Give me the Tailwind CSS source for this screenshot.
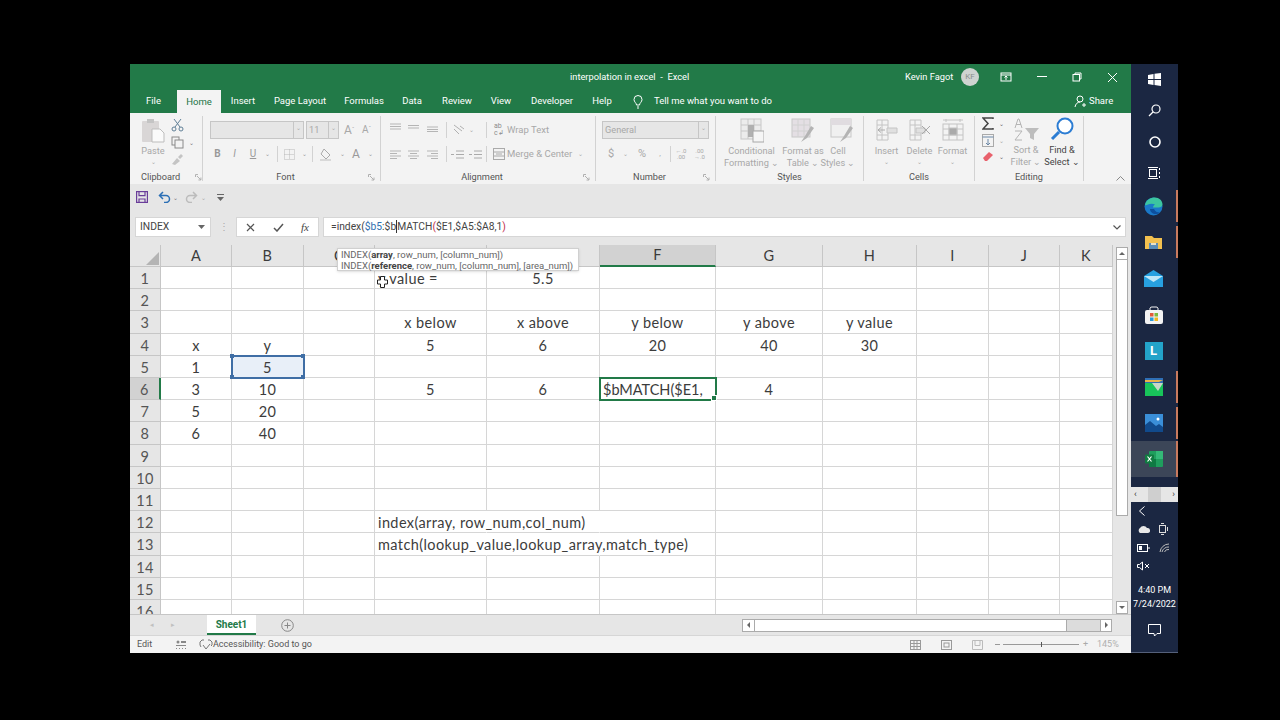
<!DOCTYPE html>
<html lang="en">
<head>
<meta charset="UTF-8">
<title>interpolation in excel - Excel</title>
<script src="https://cdn.jsdelivr.net/npm/@tailwindcss/browser@4"></script>
</head>
<body class="bg-black">
<div class="w-[1280px] h-[720px] bg-black pt-[64px] pl-[130px] overflow-hidden font-['Roboto',sans-serif]">
<div class="flex w-[1048px] h-[589px]">

<!-- excel window -->
<div class="relative w-[1001px] h-full flex flex-col bg-[#e6e6e6] overflow-hidden">

  <!-- title bar -->
  <div class="h-[26px] bg-[#227a48] text-white text-[9.3px] flex items-center shrink-0">
    <div class="w-[775px] pl-[440px] whitespace-pre">interpolation in excel  -  Excel</div>
    <div class="w-[48px] whitespace-nowrap">Kevin Fagot</div>
    <div class="ml-[8px] w-[18px] h-[18px] rounded-full bg-[#cfd3d0] text-[#8a8f8c] text-[8px] flex items-center justify-center">KF</div>
    <div class="ml-[9px] w-[36px] flex justify-center"><svg width="12" height="10" viewBox="0 0 12 10" fill="none" stroke="#fff"><rect x="1" y="1" width="10" height="8"/><path d="M1 3h10M6 8V4M4.500 5.500 6 4l1.500 1.500"/></svg></div>
    <div class="w-[35px] flex justify-center"><svg width="10" height="2"><rect width="10" height="1" fill="#fff"/></svg></div>
    <div class="w-[36px] flex justify-center"><svg width="10" height="10" viewBox="0 0 10 10" fill="none" stroke="#fff"><rect x="1" y="2.500" width="6.500" height="6.500"/><path d="M3 2.500V1h6v6H7.500"/></svg></div>
    <div class="w-[35px] flex justify-center"><svg width="11" height="11" viewBox="0 0 11 11" stroke="#fff"><path d="M1 1l9 9M10 1l-9 9"/></svg></div>
  </div>

  <!-- tabs -->
  <div class="h-[23px] bg-[#227a48] text-white text-[9.5px] flex items-center shrink-0">
    <div class="w-[47px] text-center">File</div>
    <div class="w-[44px] h-full pt-[1px] bg-[#f3f3f3] text-[#217346] text-center flex items-center justify-center">Home</div>
    <div class="w-[44px] text-center">Insert</div>
    <div class="w-[70px] text-center">Page Layout</div>
    <div class="w-[58px] text-center">Formulas</div>
    <div class="w-[38px] text-center">Data</div>
    <div class="w-[52px] text-center">Review</div>
    <div class="w-[36px] text-center">View</div>
    <div class="w-[66px] text-center">Developer</div>
    <div class="w-[34px] text-center">Help</div>
    <div class="ml-[14px] w-[12px]"><svg width="10" height="14" viewBox="0 0 10 14" fill="none" stroke="#fff"><path d="M3.500 10C3.500 8 1 7 1 4.500a4 4 0 0 1 8 0C9 7 6.500 8 6.500 10zM4 12h2M4.500 13.500h1"/></svg></div>
    <div class="ml-[9px] w-[420px] whitespace-nowrap">Tell me what you want to do</div>
    <div class="flex items-center gap-[2px]"><svg width="13" height="13" viewBox="0 0 13 13" fill="none" stroke="#fff"><circle cx="6" cy="4" r="3"/><path d="M1 12c.5-3 2.500-5 5-5M8 10h4M10 8v4"/></svg>Share</div>
  </div>

  <!-- ribbon -->
  <div class="h-[71px] bg-[#f3f3f3] flex shrink-0 text-[9.200px] leading-[12px] text-[#a8a8a8] py-[3px]">

    <!-- clipboard -->
    <div class="w-[73px] border-r border-[#d2d2d2] flex flex-col">
      <div class="h-[54px] flex pl-[10px] pt-[2px]">
        <div class="w-[26px] flex flex-col items-center">
          <svg width="24" height="25" viewBox="0 0 24 25"><rect x="1" y="3" width="17" height="21" rx="1" fill="#d9d6d6"/><rect x="6" y="1" width="7" height="4" fill="#c4c4c4"/><path d="M11 11h8l4 4v9H11z" fill="#fafafa" stroke="#bdbdbd"/></svg>
          <div class="mt-[2px]">Paste</div>
          <div class="text-[6px] leading-[10px]">⌄</div>
        </div>
        <div class="ml-[5px] flex flex-col items-start gap-[4px]">
          <svg width="13" height="14" viewBox="0 0 13 14" fill="none" stroke="#5f7f96"><path d="M3 1l6 8M10 1L4 9"/><circle cx="3" cy="11" r="2"/><circle cx="10" cy="11" r="2"/></svg>
          <div class="flex items-center gap-[5px]"><svg width="13" height="13" viewBox="0 0 13 13" fill="none" stroke="#8a8a8a"><rect x="1" y="1" width="7" height="8"/><rect x="4" y="4" width="8" height="8" fill="#f3f3f3"/></svg><span class="text-[6px] leading-[8px] text-[#777]">⌄</span></div>
          <svg width="13" height="12" viewBox="0 0 13 12"><path d="M1 11l5-6 3 3-5 4zM7 4l3-3 2 2-3 3z" fill="#c4c4c4"/></svg>
        </div>
      </div>
      <div class="h-[11px] flex items-start leading-[14px] pl-[11px] text-[#555]"><span class="w-[55px]">Clipboard</span><svg class="mt-[4px]" width="7" height="7" viewBox="0 0 7 7" fill="none" stroke="#b0b0b0"><path d="M.5 3V.5H3M2 2l4 4M6 3.500V6H3.500"/></svg></div>
    </div>

    <!-- font -->
    <div class="w-[178px] border-r border-[#d2d2d2] flex flex-col">
      <div class="h-[54px] pl-[7px] pt-[5px]">
        <div class="flex items-center h-[18px]">
          <div class="w-[94px] h-[18px] bg-[#e6e6e6] border border-[#c6c6c6] flex justify-end"><span class="w-[10px] border-l border-[#c6c6c6] text-[6px] text-center">⌄</span></div>
          <div class="ml-[2px] w-[33px] h-[18px] bg-[#e6e6e6] border border-[#c6c6c6] flex justify-between pl-[2px]"><span class="leading-[16px]">11</span><span class="w-[10px] border-l border-[#c6c6c6] text-[6px] text-center">⌄</span></div>
          <span class="ml-[5px] text-[12px] w-[18px]">A<sup class="text-[6px]">ˆ</sup></span>
          <span class="text-[10px] w-[14px]">A<sup class="text-[6px]">ˇ</sup></span>
        </div>
        <div class="flex items-center h-[18px] mt-[6px] text-[10px] text-[#999]">
          <span class="w-[15px] text-center font-bold">B</span>
          <span class="w-[19px] text-center italic">I</span>
          <span class="w-[18px] text-center underline">U</span>
          <span class="w-[10px] text-[6px] text-center">⌄</span>
          <span class="w-[6px] h-[16px] border-r border-[#d2d2d2]"></span>
          <span class="w-[22px] flex justify-center"><svg width="11" height="11" viewBox="0 0 11 11" fill="none" stroke="#b8b8b8" stroke-dasharray="1 1"><rect x=".5" y=".5" width="10" height="10"/><path d="M.5 5.500h10M5.500.5v10"/></svg></span>
          <span class="w-[8px] text-[6px] text-center">⌄</span>
          <span class="w-[5px] h-[16px] border-r border-[#d2d2d2]"></span>
          <span class="w-[25px] flex justify-center"><svg width="13" height="13" viewBox="0 0 13 13"><path d="M5 1l6 6-4 4-5-5z" fill="none" stroke="#aaa"/><rect x="1" y="11" width="11" height="2" fill="#d8d8d8"/></svg></span>
          <span class="w-[8px] text-[6px] text-center">⌄</span>
          <span class="w-[20px] text-center text-[12px]">A</span>
          <span class="w-[8px] text-[6px] text-center">⌄</span>
        </div>
      </div>
      <div class="h-[11px] flex items-start leading-[14px] text-[#555]"><span class="w-[165px] text-center">Font</span><svg class="mt-[4px]" width="7" height="7" viewBox="0 0 7 7" fill="none" stroke="#b0b0b0"><path d="M.5 3V.5H3M2 2l4 4M6 3.500V6H3.500"/></svg></div>
    </div>

    <!-- alignment -->
    <div class="w-[215px] border-r border-[#d2d2d2] flex flex-col">
      <div class="h-[54px] pl-[9px] pt-[5px]">
        <div class="flex items-center h-[18px]">
          <span class="w-[18px] mb-[5px]"><svg width="11" height="9" viewBox="0 0 11 9" stroke="#b5b5b5"><path d="M0 1h11M0 3.500h11M0 6h11"/></svg></span>
          <span class="w-[19px] mb-[5px]"><svg width="11" height="9" viewBox="0 0 11 9" stroke="#b5b5b5"><path d="M0 2.500h11M0 5h11"/></svg></span>
          <span class="w-[19px] mb-[5px]"><svg width="11" height="9" viewBox="0 0 11 9" stroke="#b5b5b5"><path d="M0 4h11M0 6.500h11M0 8.500h11"/></svg></span>
          <span class="w-[1px] h-[16px] bg-[#d2d2d2]"></span>
          <span class="w-[19px] pl-[5px]"><svg width="13" height="12" viewBox="0 0 13 12" fill="none" stroke="#b0b0b0"><path d="M2 1l8 6M2 5l5 5M8 2l4 3"/></svg></span>
          <span class="w-[10px] text-[6px] text-center">⌄</span>
          <span class="w-[11px] h-[16px] border-r border-[#d2d2d2]"></span>
          <span class="w-[20px] pl-[7px] text-[7px] leading-[7px] text-[#8c8c8c]">ab<br>c↲</span>
          <span class="text-[9.500px] whitespace-nowrap">Wrap Text</span>
        </div>
        <div class="flex items-center h-[18px] mt-[6px]">
          <span class="w-[18px]"><svg width="11" height="9" viewBox="0 0 11 9" stroke="#b5b5b5"><path d="M0 1h11M0 3.500h7M0 6h11M0 8.500h7"/></svg></span>
          <span class="w-[19px]"><svg width="11" height="9" viewBox="0 0 11 9" stroke="#b5b5b5"><path d="M0 1h11M2 3.500h7M0 6h11M2 8.500h7"/></svg></span>
          <span class="w-[19px]"><svg width="11" height="9" viewBox="0 0 11 9" stroke="#b5b5b5"><path d="M0 1h11M4 3.500h7M0 6h11M4 8.500h7"/></svg></span>
          <span class="w-[1px] h-[16px] bg-[#d2d2d2]"></span>
          <span class="w-[18px] pl-[4px]"><svg width="13" height="9" viewBox="0 0 13 9" stroke="#aaa"><path d="M5 1h8M5 4.500h8M5 8h8M0 4.500h3"/></svg></span>
          <span class="w-[18px] pl-[4px]"><svg width="13" height="9" viewBox="0 0 13 9" stroke="#aaa"><path d="M5 1h8M5 4.500h8M5 8h8M0 4.500h3"/></svg></span>
          <span class="w-[4px] h-[16px] border-r border-[#d2d2d2]"></span>
          <span class="w-[20px] pl-[6px]"><svg width="12" height="12" viewBox="0 0 12 12" fill="none" stroke="#aaa"><rect x=".5" y=".5" width="11" height="11"/><path d="M.5 4h11M.5 8h11M3 6h6"/></svg></span>
          <span class="text-[9.500px] whitespace-nowrap">Merge &amp; Center</span>
          <span class="ml-[6px] text-[6px]">⌄</span>
        </div>
      </div>
      <div class="h-[11px] flex items-start leading-[14px] text-[#555]"><span class="w-[202px] text-center">Alignment</span><svg class="mt-[4px]" width="7" height="7" viewBox="0 0 7 7" fill="none" stroke="#b0b0b0"><path d="M.5 3V.5H3M2 2l4 4M6 3.500V6H3.500"/></svg></div>
    </div>

    <!-- number -->
    <div class="w-[120px] border-r border-[#d2d2d2] flex flex-col">
      <div class="h-[54px] pl-[6px] pt-[5px]">
        <div class="w-[107px] h-[18px] bg-[#e6e6e6] border border-[#c6c6c6] flex justify-between pl-[2px]"><span class="leading-[16px]">General</span><span class="w-[10px] border-l border-[#c6c6c6] text-[6px] text-center">⌄</span></div>
        <div class="flex items-center h-[18px] mt-[6px] text-[11px]">
          <span class="w-[18px] text-center">$</span>
          <span class="w-[10px] text-[6px] text-center">⌄</span>
          <span class="w-[24px] text-center">%</span>
          <span class="w-[12px] text-center text-[8px]">,</span>
          <span class="w-[5px] h-[16px] border-r border-[#d2d2d2]"></span>
          <span class="w-[20px] text-center text-[6px] leading-[6px]">←.0<br>.00</span>
          <span class="w-[17px] text-center text-[6px] leading-[6px]">.00<br>→.0</span>
        </div>
      </div>
      <div class="h-[11px] flex items-start leading-[14px] text-[#555]"><span class="w-[107px] text-center">Number</span><svg class="mt-[4px]" width="7" height="7" viewBox="0 0 7 7" fill="none" stroke="#b0b0b0"><path d="M.5 3V.5H3M2 2l4 4M6 3.500V6H3.500"/></svg></div>
    </div>

    <!-- styles -->
    <div class="w-[148px] border-r border-[#d2d2d2] flex flex-col">
      <div class="h-[54px] flex pl-[12px] pt-[2px] text-center">
        <div class="w-[47px] flex flex-col items-center">
          <svg width="24" height="25" viewBox="0 0 24 25" fill="none"><rect x="1" y="1" width="20" height="20" fill="#ececec" stroke="#c8c8c8"/><path d="M8 1v20M14 1v20M1 7h20M1 13h20" stroke="#c8c8c8"/><rect x="8" y="7" width="6" height="12" fill="#b0b0b0"/><rect x="13" y="13" width="11" height="11" fill="#f5f5f5" stroke="#a8a8a8"/></svg>
          <div class="mt-[2px] whitespace-nowrap">Conditional</div>
          <div class="whitespace-nowrap">Formatting ⌄</div>
        </div>
        <div class="ml-[5px] w-[46px] flex flex-col items-center">
          <svg width="24" height="25" viewBox="0 0 24 25" fill="none"><rect x="1" y="1" width="18" height="18" fill="#e4dfe4" stroke="#c8c8c8"/><path d="M7 1v18M13 1v18M1 7h18M1 13h18" stroke="#d2d2d2"/><path d="M10 24l4-6 6-10 3 2-7 10z" fill="#b4b4b4"/></svg>
          <div class="mt-[2px] whitespace-nowrap">Format as</div>
          <div class="whitespace-nowrap">Table ⌄</div>
        </div>
        <div class="w-[24px] flex flex-col items-center">
          <svg class="ml-[8px]" width="24" height="25" viewBox="0 0 24 25" fill="none"><rect x="1" y="1" width="20" height="18" fill="#f0f0f0" stroke="#c8c8c8"/><rect x="1" y="1" width="20" height="6" fill="#e0dce0"/><path d="M10 24l4-6 6-10 3 2-7 10z" fill="#b4b4b4"/></svg>
          <div class="mt-[2px]">Cell</div>
          <div class="whitespace-nowrap">Styles ⌄</div>
        </div>
      </div>
      <div class="h-[11px] text-center text-[#555] leading-[14px]">Styles</div>
    </div>

    <!-- cells -->
    <div class="w-[111px] border-r border-[#d2d2d2] flex flex-col">
      <div class="h-[54px] flex pl-[6px] pt-[2px] text-center">
        <div class="w-[33px] flex flex-col items-center">
          <svg width="22" height="25" viewBox="0 0 22 25" fill="none" stroke="#c4c4c4"><path d="M1 2h11v5H1zM1 17h11v5H1zM1 7v10M12 17V7M6 2v20"/><path d="M11 10h10v5H11z" fill="#e0e0e0"/><path d="M2 12h7M5 9.500 2 12l3 2.500" stroke="#aaa"/></svg>
          <div class="mt-[2px]">Insert</div>
          <div class="text-[6px] leading-[10px]">⌄</div>
        </div>
        <div class="w-[33px] flex flex-col items-center">
          <svg width="22" height="25" viewBox="0 0 22 25" fill="none" stroke="#c4c4c4"><path d="M1 2h11v5H1zM1 17h11v5H1zM1 7v10M12 17V7M6 2v20"/><path d="M7 10h9v5H7z" fill="#e0e0e0"/><path d="M13 8l8 8M21 8l-8 8" stroke="#aaa"/></svg>
          <div class="mt-[2px]">Delete</div>
          <div class="text-[6px] leading-[10px]">⌄</div>
        </div>
        <div class="w-[33px] flex flex-col items-center">
          <svg width="22" height="25" viewBox="0 0 22 25" fill="none" stroke="#c4c4c4"><path d="M1 2h20M4 1v3M18 1v3"/><rect x="1" y="6" width="20" height="16"/><path d="M7 6v16M15 6v16M1 11h20M1 17h20"/><rect x="7" y="10" width="8" height="7" fill="#aaa"/></svg>
          <div class="mt-[2px]">Format</div>
          <div class="text-[6px] leading-[10px]">⌄</div>
        </div>
      </div>
      <div class="h-[11px] text-center text-[#555] leading-[14px]">Cells</div>
    </div>

    <!-- editing -->
    <div class="w-[109px] border-r border-[#d2d2d2] flex flex-col">
      <div class="h-[54px] flex pl-[7px] pt-[1px] text-center">
        <div class="w-[26px] flex flex-col gap-[4px]">
          <div class="flex items-center gap-[5px]"><svg width="12" height="13" viewBox="0 0 12 13" fill="none" stroke="#444" stroke-width="1.500"><path d="M11 2V1H1l5 5.500L1 12h10v-1"/></svg><span class="text-[6px] leading-[8px] text-[#666]">⌄</span></div>
          <div class="flex items-center gap-[5px]"><svg width="12" height="13" viewBox="0 0 12 13" fill="none" stroke="#aaa"><rect x=".5" y=".5" width="11" height="12"/><path d="M.5 3h11M6 5v6M4 9l2 2 2-2" stroke="#6b87a6"/></svg><span class="text-[6px] leading-[8px]">⌄</span></div>
          <div class="flex items-center gap-[5px]"><svg width="12" height="11" viewBox="0 0 12 11"><path d="M1 7l6-6 4 3-6 6H3z" fill="#e8616c"/></svg><span class="text-[6px] leading-[8px] text-[#666]">⌄</span></div>
        </div>
        <div class="w-[36px] flex flex-col items-center">
          <svg width="26" height="25" viewBox="0 0 26 25"><path d="M12 11 26 11l-5 6v6l-4-2v-4z" fill="#bdbdbd"/><path d="M2 11 5 2h1l3 9M3 7.500h5M2 14h7l-7 9h7" fill="none" stroke="#b4b4b4"/></svg>
          <div class="mt-[2px] whitespace-nowrap">Sort &amp;</div>
          <div class="whitespace-nowrap">Filter ⌄</div>
        </div>
        <div class="w-[36px] flex flex-col items-center text-[#444]">
          <svg width="26" height="25" viewBox="0 0 26 25" fill="none"><circle cx="16" cy="9" r="7.500" stroke="#2b7cd3" stroke-width="2" fill="#fff"/><path d="M10 15l-7 7" stroke="#2b7cd3" stroke-width="3"/></svg>
          <div class="mt-[2px] whitespace-nowrap">Find &amp;</div>
          <div class="whitespace-nowrap">Select ⌄</div>
        </div>
      </div>
      <div class="h-[11px] text-center text-[#555] leading-[14px]">Editing</div>
    </div>

    <div class="flex-1 flex flex-col justify-end items-end pr-[6px] pb-[0px]"><svg width="9" height="5" viewBox="0 0 9 5" fill="none" stroke="#888"><path d="M.5 4.500l4-4 4 4"/></svg></div>
  </div>

  <!-- quick access toolbar -->
  <div class="h-[26px] flex items-center pl-[6px] shrink-0">
    <svg width="12" height="12" viewBox="0 0 12 12" fill="none" stroke="#6a3d9a" stroke-width="1.200"><rect x=".6" y=".6" width="10.800" height="10.800"/><path d="M3 .6v4h6v-4M3 11.400V8h6v3.400"/></svg>
    <svg class="ml-[10px]" width="13" height="12" viewBox="0 0 13 12" fill="none" stroke="#2b6fb5" stroke-width="1.500"><path d="M5 1 1.500 4.500 5 8M2 4.500h6a3.500 3.500 0 0 1 0 7H6"/></svg>
    <span class="ml-[2px] text-[6px] text-[#777]">⌄</span>
    <svg class="ml-[7px]" width="13" height="12" viewBox="0 0 13 12" fill="none" stroke="#bcbcbc" stroke-width="1.500"><path d="M8 1l3.500 3.500L8 8M11 4.500H5a3.500 3.500 0 0 0 0 7h2"/></svg>
    <span class="ml-[3px] text-[6px] text-[#aaa]">⌄</span>
    <svg class="ml-[11px]" width="7" height="7" viewBox="0 0 7 7" fill="#666"><rect width="7" height="1"/><path d="M0 3h7L3.500 7z"/></svg>
  </div>

  <!-- formula bar -->
  <div class="h-[35px] flex pl-[5px] pt-[7px] shrink-0 text-[10.300px] text-[#444]">
    <div class="w-[76px] h-[20px] bg-white border border-[#d6d6d6] flex items-center justify-between pl-[4px] pr-[5px]">INDEX<svg width="7" height="4"><path d="M0 0h7L3.500 4z" fill="#666"/></svg></div>
    <div class="w-[25px] h-[20px] flex items-center justify-center text-[#aaa]">⋮</div>
    <div class="w-[83px] h-[20px] bg-white border border-[#d6d6d6] flex items-center">
      <svg class="ml-[9px]" width="9" height="9" viewBox="0 0 9 9" stroke="#555" stroke-width="1.200"><path d="M1 1l7 7M8 1L1 8"/></svg>
      <svg class="ml-[18px]" width="11" height="9" viewBox="0 0 11 9" fill="none" stroke="#555" stroke-width="1.500"><path d="M1 5l3 3 6-7"/></svg>
      <span class="ml-[17px] italic font-['Liberation_Serif',serif] text-[11px]">fx</span>
    </div>
    <div class="ml-[4px] w-[803px] h-[20px] bg-white border border-[#d6d6d6] flex items-center pl-[7px] pr-[4px] justify-between">
      <span>=index(<span class="text-[#2f6fb0]">$b5</span>:$b<span class="border-l border-[#333]">MATCH</span><span class="text-[#c0304a]">(</span>$E1,$A5:$A8,1<span class="text-[#c0304a]">)</span></span>
      <svg width="8" height="5" viewBox="0 0 8 5" fill="none" stroke="#555" stroke-width="1.200"><path d="M.5.5 4 4 7.500.5"/></svg>
    </div>
  </div>

  <!-- sheet -->
  <div class="h-[369px] flex shrink-0 overflow-hidden">
    <table class="table-fixed border-separate border-spacing-0 w-[983px] h-min font-['Lato',sans-serif] text-[14.5px] leading-[18px] tracking-[.4px] text-[#3c3c3c] text-center bg-white [&_td]:pt-[2px] [&_td]:border-r [&_td]:border-b [&_td]:border-[#d6d6d6] [&_td]:whitespace-nowrap [&_th]:p-0 [&_th]:font-normal [&_th]:bg-[#e6e6e6] [&_th]:border-r [&_th]:border-[#c6c6c6] [&_th]:border-b">
      <colgroup><col class="w-[31px]"><col class="w-[71px]"><col class="w-[72px]"><col class="w-[71px]"><col class="w-[112px]"><col class="w-[113px]"><col class="w-[116px]"><col class="w-[107px]"><col class="w-[94px]"><col class="w-[72px]"><col class="w-[71px]"><col class="w-[53px]"></colgroup>
      <thead>
        <tr class="h-[22px]">
          <th class="overflow-hidden"><svg class="ml-[16px] mt-[6px]" width="13" height="13"><path d="M13 0v13H0z" fill="#b4b4b4"/></svg></th>
          <th>A</th><th>B</th><th>C</th><th>D</th><th>E</th>
          <th class="bg-[#d2d2d2]! border-b-2! border-b-[#227a48]!">F</th>
          <th>G</th><th>H</th><th>I</th><th>J</th><th>K</th>
        </tr>
      </thead>
      <tbody class="[&_td:first-child]:bg-[#e6e6e6] [&_td:first-child]:border-[#c6c6c6] [&_td:first-child]:text-[#555]">
        <tr class="h-[22px]"><td>1</td><td></td><td></td><td></td><td class="text-left pl-[3px]!">y value =</td><td>5.5</td><td></td><td></td><td></td><td></td><td></td><td></td></tr>
        <tr class="h-[22px]"><td>2</td><td></td><td></td><td></td><td></td><td></td><td></td><td></td><td></td><td></td><td></td><td></td></tr>
        <tr class="h-[23px]"><td>3</td><td></td><td></td><td></td><td>x below</td><td>x above</td><td>y below</td><td>y above</td><td>y value</td><td></td><td></td><td></td></tr>
        <tr class="h-[22px]"><td>4</td><td>x</td><td>y</td><td></td><td>5</td><td>6</td><td>20</td><td>40</td><td>30</td><td></td><td></td><td></td></tr>
        <tr class="h-[22px]"><td>5</td><td>1</td>
          <td class="relative bg-[#e8eff8] outline-2 -outline-offset-1 outline-[#3f6ea5]">5<span class="absolute -left-[2px] -top-[2px] w-[4px] h-[4px] bg-[#3f6ea5]"></span><span class="absolute -right-[2px] -top-[2px] w-[4px] h-[4px] bg-[#3f6ea5]"></span><span class="absolute -left-[2px] -bottom-[2px] w-[4px] h-[4px] bg-[#3f6ea5]"></span><span class="absolute -right-[2px] -bottom-[2px] w-[4px] h-[4px] bg-[#3f6ea5]"></span></td>
          <td></td><td></td><td></td><td></td><td></td><td></td><td></td><td></td><td></td></tr>
        <tr class="h-[22px]"><td class="bg-[#d2d2d2]! border-r-2! border-r-[#227a48]!">6</td><td>3</td><td>10</td><td></td><td>5</td><td>6</td>
          <td class="relative text-left pl-[3px]! tracking-normal outline-2 -outline-offset-1 outline-[#227a48]">$bMATCH($E1,<span class="absolute -right-[2px] -bottom-[2px] w-[4px] h-[4px] bg-[#227a48] border border-white box-content"></span></td>
          <td>4</td><td></td><td></td><td></td><td></td></tr>
        <tr class="h-[22px]"><td>7</td><td>5</td><td>20</td><td></td><td></td><td></td><td></td><td></td><td></td><td></td><td></td><td></td></tr>
        <tr class="h-[23px]"><td>8</td><td>6</td><td>40</td><td></td><td></td><td></td><td></td><td></td><td></td><td></td><td></td><td></td></tr>
        <tr class="h-[22px]"><td>9</td><td></td><td></td><td></td><td></td><td></td><td></td><td></td><td></td><td></td><td></td><td></td></tr>
        <tr class="h-[22px]"><td>10</td><td></td><td></td><td></td><td></td><td></td><td></td><td></td><td></td><td></td><td></td><td></td></tr>
        <tr class="h-[22px]"><td>11</td><td></td><td></td><td></td><td></td><td></td><td></td><td></td><td></td><td></td><td></td><td></td></tr>
        <tr class="h-[22px]"><td>12</td><td></td><td></td><td></td><td class="text-left pl-[3px]! border-r-transparent!">index(array, row_num,col_num)</td><td class="border-r-transparent!"></td><td></td><td></td><td></td><td></td><td></td><td></td></tr>
        <tr class="h-[23px]"><td>13</td><td></td><td></td><td></td><td class="text-left pl-[3px]! border-r-transparent!">match(lookup_value,lookup_array,match_type)</td><td class="border-r-transparent!"></td><td></td><td></td><td></td><td></td><td></td><td></td></tr>
        <tr class="h-[22px]"><td>14</td><td></td><td></td><td></td><td></td><td></td><td></td><td></td><td></td><td></td><td></td><td></td></tr>
        <tr class="h-[22px]"><td>15</td><td></td><td></td><td></td><td></td><td></td><td></td><td></td><td></td><td></td><td></td><td></td></tr>
        <tr class="h-[22px]"><td>16</td><td></td><td></td><td></td><td></td><td></td><td></td><td></td><td></td><td></td><td></td><td></td></tr>
      </tbody>
    </table>
    <!-- vertical scrollbar -->
    <div class="ml-[3px] w-[12px] h-full pt-[2px] flex flex-col">
      <div class="h-[13px] bg-white border border-[#ababab] flex items-center justify-center"><svg width="6" height="3"><path d="M3 0l3 3H0z" fill="#666"/></svg></div>
      <div class="h-[256px] bg-white border-x border-b border-[#ababab]"></div>
      <div class="flex-1"></div>
      <div class="h-[13px] bg-white border border-[#ababab] flex items-center justify-center"><svg width="6" height="3"><path d="M0 0h6L3 3z" fill="#666"/></svg></div>
    </div>
  </div>

  <!-- sheet tabs -->
  <div class="h-[21px] flex items-center shrink-0 border-t border-[#c6c6c6] text-[10px]">
    <span class="ml-[20px] text-[7px] leading-[10px] text-[#c0c0c0] w-[21px]">◂</span>
    <span class="text-[7px] leading-[10px] text-[#c0c0c0] w-[36px]">▸</span>
    <div class="w-[49px] h-full -mt-px bg-white border-b-2 border-[#227a48] text-[#227a48] font-bold text-center leading-[19px]">Sheet1</div>
    <svg class="ml-[25px]" width="13" height="13" viewBox="0 0 13 13" fill="none" stroke="#888"><circle cx="6.500" cy="6.500" r="5.800"/><path d="M3.500 6.500h6M6.500 3.500v6"/></svg>
    <div class="ml-[448px] w-[370px] h-[13px] flex border border-[#ababab]">
      <div class="w-[12px] bg-white border-r border-[#ababab] flex items-center justify-center"><svg width="3" height="6"><path d="M3 0v6L0 3z" fill="#666"/></svg></div>
      <div class="w-[312px] bg-white border-r border-[#ababab]"></div>
      <div class="flex-1 bg-[#dcdcdc]"></div>
      <div class="w-[11px] bg-white border-l border-[#ababab] flex items-center justify-center"><svg width="3" height="6"><path d="M0 0v6l3-3z" fill="#666"/></svg></div>
    </div>
  </div>

  <!-- status bar -->
  <div class="flex-1 bg-[#f3f3f3] border-t border-[#d6d6d6] flex items-center text-[9px] text-[#555]">
    <span class="ml-[7px] w-[39px]">Edit</span>
    <svg width="10" height="10" viewBox="0 0 10 10" fill="#888"><circle cx="2" cy="2" r="1.500"/><path d="M5 1h5v2H5zM0 5h10v1H0zM0 8h1v1H0zM3 8h1v1H3zM6 8h1v1H6zM9 8h1v1H9z"/></svg>
    <svg class="ml-[13px]" width="14" height="11" viewBox="0 0 14 11" fill="none" stroke="#777"><path d="M5 1H3L1 3v3l1 2M9 1h2l2 2v3l-1 1M4 6l3 4 4-5"/></svg>
    <span class="w-[97px] whitespace-nowrap">Accessibility: Good to go</span>
    <svg class="ml-[600px]" width="11" height="10" viewBox="0 0 11 10" fill="none" stroke="#999"><rect x=".5" y=".5" width="10" height="9"/><path d="M4 .5v9M7 .5v9M.5 3.500h10M.5 6.500h10"/></svg>
    <svg class="ml-[20px]" width="11" height="10" viewBox="0 0 11 10" fill="none" stroke="#999"><rect x=".5" y=".5" width="10" height="9"/><rect x="3" y="3" width="5" height="4"/></svg>
    <svg class="ml-[20px]" width="11" height="10" viewBox="0 0 11 10" fill="none" stroke="#bbb"><path d="M.5 9.500V.5h10v9zM3 .5v5h5v-5"/></svg>
    <span class="ml-[12px] w-[5px] h-px bg-[#999]"></span>
    <span class="ml-[3px] w-[76px] h-px bg-[#999] flex justify-center items-center"><span class="w-px h-[5px] bg-[#555]"></span></span>
    <span class="ml-[4px] text-[#aaa] w-[14px]">+</span>
    <span class="text-[#b0b0b0]">145%</span>
  </div>

  <!-- formula tooltip -->
  <div class="absolute left-[207px] top-[184px] w-[242px] h-[23px] bg-white border border-[#d0d0d0] shadow-sm text-[9.500px] leading-[11px] text-[#666] pl-[3px] whitespace-nowrap">
    <div>INDEX(<b class="text-[#444]">array</b>, row_num, [column_num])</div>
    <div>INDEX(<b class="text-[#444]">reference</b>, row_num, [column_num], [area_num])</div>
  </div>

  <!-- mouse cursor -->
  <svg class="absolute left-[247px] top-[212px]" width="11" height="12" viewBox="0 0 11 12"><path d="M3.500.5h4v3.500h3v4h-3v3.500h-4V8H.5V4h3z" fill="#fff" stroke="#222"/></svg>
</div>

<!-- windows taskbar -->
<div class="w-[47px] h-full bg-[#1b2742] flex flex-col text-white border-b border-[#55607a]">
  <div class="h-[31px] shrink-0 flex items-center justify-center"><svg width="13" height="13" viewBox="0 0 13 13" fill="#fff"><path d="M0 2l5.500-1v5H0zM6.500.8 13 0v6H6.500zM0 7h5.500v5L0 11zM6.500 7H13v6l-6.500-1z"/></svg></div>
  <div class="h-[31px] shrink-0 flex items-center justify-center"><svg width="13" height="13" viewBox="0 0 13 13" fill="none" stroke="#fff" stroke-width="1.200"><circle cx="8" cy="5" r="4"/><path d="M5 8l-4 4"/></svg></div>
  <div class="h-[31px] shrink-0 flex items-center justify-center"><svg width="12" height="12" viewBox="0 0 12 12" fill="none" stroke="#fff" stroke-width="1.600"><circle cx="6" cy="6" r="5"/></svg></div>
  <div class="h-[31px] shrink-0 flex items-center justify-center"><svg width="13" height="12" viewBox="0 0 13 12" fill="none" stroke="#fff"><rect x="1.500" y="2.500" width="7" height="7"/><path d="M0 .5h10M0 11.500h10M11.500 1v2M11.500 5v2M11.500 9v2"/></svg></div>
  <div class="h-[32px] my-[2px] shrink-0 flex items-center justify-center border-r-2 border-[#c97a5e]"><svg width="19" height="19" viewBox="0 0 19 19"><circle cx="9.500" cy="9.500" r="9" fill="#1a78c8"/><path d="M1 8C2 2 8 .5 11 .5c4 0 7.500 3 7.500 7 0 2-2 3-4 3H9c0-2 2-3 2-3-2-1-5-1-7 0-1 .5-2 1-3 .5z" fill="#3cc5a0"/><path d="M6 12c0 3 3 5.500 7 5 1 0 2-1 3-1.500-3 0-5-1-6-3.500z" fill="#0d4f9e"/></svg></div>
  <div class="h-[32px] my-[2px] shrink-0 flex items-center justify-center border-r-2 border-[#c97a5e]"><svg width="17" height="14" viewBox="0 0 17 14"><path d="M0 1h7l2 2h8v11H0z" fill="#f2c04f"/><rect x="4" y="8" width="9" height="6" fill="#5b8db8"/><rect x="6" y="8" width="5" height="2" fill="#e9e2c8"/></svg></div>
  <div class="h-[33px] my-[2px] shrink-0 flex items-center justify-center border-r-2 border-transparent"><svg width="19" height="17" viewBox="0 0 19 17"><path d="M0 6l9.500-6L19 6v11H0z" fill="#27a0e0"/><path d="M0 6l9.500 6L19 6" fill="#bfe6f7"/></svg></div>
  <div class="h-[32px] my-[2px] shrink-0 flex items-center justify-center border-r-2 border-transparent"><svg width="18" height="18" viewBox="0 0 18 18"><rect y="4" width="18" height="14" rx="2" fill="#f3f3f3"/><path d="M5 5V2a2 2 0 0 1 2-1h4a2 2 0 0 1 2 1v3" fill="none" stroke="#f3f3f3"/><rect x="5" y="7" width="3.500" height="3.500" fill="#e25a3a"/><rect x="9.500" y="7" width="3.500" height="3.500" fill="#7cbb3f"/><rect x="5" y="11.500" width="3.500" height="3.500" fill="#2b9ad8"/><rect x="9.500" y="11.500" width="3.500" height="3.500" fill="#f2b61f"/></svg></div>
  <div class="h-[32px] my-[2px] shrink-0 flex items-center justify-center border-r-2 border-transparent"><div class="w-[18px] h-[18px] bg-[#23a3c9] text-white font-bold text-[13px] leading-[18px] text-center">L</div></div>
  <div class="h-[32px] my-[2px] shrink-0 flex items-center justify-center border-r-2 border-[#c97a5e]"><svg width="18" height="18" viewBox="0 0 18 18"><rect width="18" height="18" fill="#18c45a"/><rect width="18" height="5" fill="#2f6fb5"/><path d="M0 2h18l-4 2H0z" fill="#e8b34a"/><path d="M7 5h11l-5 8z" fill="#c8d6c8"/></svg></div>
  <div class="h-[32px] my-[2px] shrink-0 flex items-center justify-center border-r-2 border-[#c97a5e]"><svg width="18" height="18" viewBox="0 0 18 18"><rect width="18" height="18" fill="#3a8ed8"/><path d="M0 11l5-4 6 5 3-2 4 3v5H0z" fill="#114a8c"/><circle cx="13" cy="5" r="1.500" fill="#fff"/></svg></div>
  <div class="h-[36px] shrink-0 flex items-center justify-center bg-[#3c4658] border-r-2 border-[#c97a5e]"><svg width="18" height="16" viewBox="0 0 18 16"><rect x="4" width="14" height="16" rx="1" fill="#1f9e5d"/><rect x="11" width="7" height="8" fill="#34b877"/><rect x="4" y="8" width="7" height="8" fill="#0f7a44"/><rect y="3.500" width="9" height="9" rx="1" fill="#107c41"/><path d="M2.500 5.500l4 5M6.500 5.500l-4 5" stroke="#fff" stroke-width="1.200"/></svg></div>
  <div class="mt-[10px] h-[15px] bg-[#e6e6e6] shrink-0 flex items-center justify-between px-[3px] text-[#333] text-[9px] leading-none"><span>‹</span><span class="w-[13px] h-full bg-[#cfcfcf]"></span><span>›</span></div>
  <div class="h-[17px] pl-[8px] flex items-center"><svg width="6" height="10" viewBox="0 0 6 10" fill="none" stroke="#fff"><path d="M5.500.5l-5 4.500 5 4.500"/></svg></div>
  <div class="h-[19px] flex items-center pl-[6px] gap-[8px]">
    <svg width="13" height="8" viewBox="0 0 13 8" fill="#e8e8e8"><path d="M3 8a3 3 0 0 1 0-5 4 4 0 0 1 7 0 2.500 2.500 0 0 1 1 5z"/></svg>
    <svg class="ml-[1px]" width="9" height="12" viewBox="0 0 9 12" fill="none" stroke="#ddd"><rect x=".5" y="2.500" width="6" height="7"/><path d="M2 .5h3M2 11.500h3M8.500 4v4"/></svg>
  </div>
  <div class="h-[19px] flex items-center pl-[6px] gap-[8px]">
    <svg width="13" height="8" viewBox="0 0 13 8" fill="none" stroke="#fff"><rect x=".5" y=".5" width="10" height="7"/><rect x="2" y="2" width="3" height="4" fill="#fff" stroke="none"/><path d="M12 3v2"/></svg>
    <svg class="ml-[1px]" width="11" height="10" viewBox="0 0 11 10" fill="none" stroke="#bbb"><path d="M1 9a9 9 0 0 1 9-8M3 9a6.500 6.500 0 0 1 7-5M5.500 9a4 4 0 0 1 4.500-2.500"/></svg>
  </div>
  <div class="h-[18px] flex items-center pl-[6px]"><svg width="13" height="10" viewBox="0 0 13 10" fill="none" stroke="#fff"><path d="M.5 3.500h2L5.500 1v8l-3-2.500h-2zM8 3l4 4M12 3 8 7"/></svg></div>
  <div class="mt-[8px] h-[28px] text-[9px] leading-[14px] text-center whitespace-nowrap">4:40 PM<br>7/24/2022</div>
  <div class="mt-[7px] h-[24px] flex items-center justify-center"><svg width="13" height="13" viewBox="0 0 13 13" fill="none" stroke="#fff"><path d="M.5.5h12v9H9L6.500 12 6 9.500H.5z"/></svg></div>
</div>

</div>
</div>
</body>
</html>
